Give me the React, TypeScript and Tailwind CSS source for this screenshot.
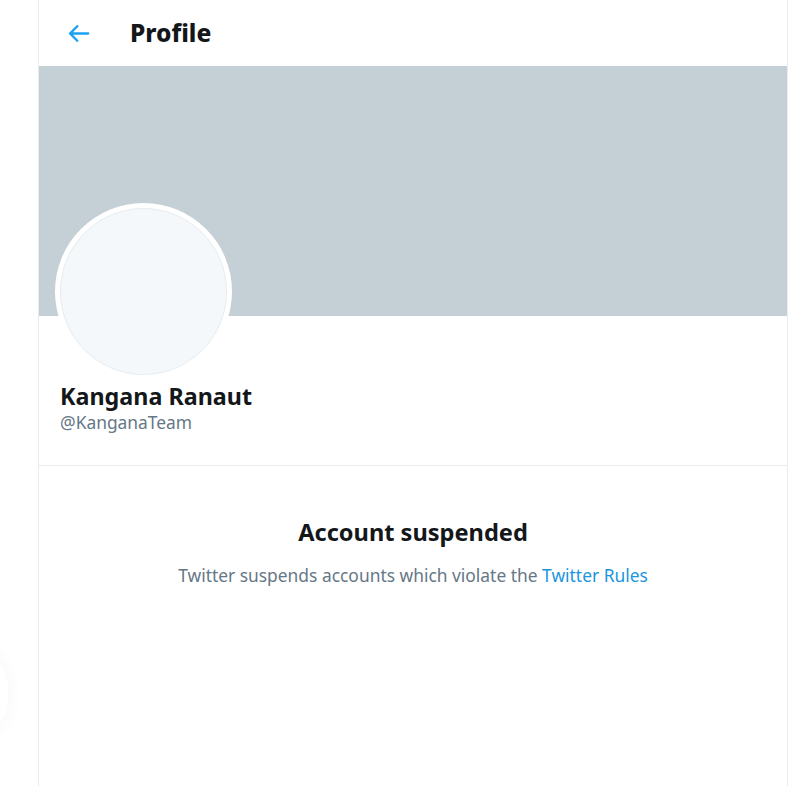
export default function App() {
  return (
    <div
      className="relative flex min-h-[786px] bg-white pl-[38px]"
      style={{ fontFamily: '"Noto Sans", "Open Sans", sans-serif' }}
    >
      {/* floating edge on the left */}
      <div className="absolute left-[-64px] top-[650px] h-[86px] w-[72px] rounded-full bg-white shadow-[0_0_18px_rgba(0,0,0,0.045)]" />

      <div className="min-h-[786px] w-[750px] border-x border-[#e6ecf0]">
        {/* header */}
        <div className="flex h-[66px] items-center pl-[25px]">
          <svg viewBox="0 0 24 24" className="h-[29px] w-[29px] fill-[#1da1f2]">
            <path d="M20 11H7.414l4.293-4.293c.39-.39.39-1.023 0-1.414s-1.023-.39-1.414 0l-6 6c-.39.39-.39 1.023 0 1.414l6 6c.195.195.45.293.707.293s.512-.098.707-.293c.39-.39.39-1.023 0-1.414L7.414 13H20c.553 0 1-.447 1-1s-.447-1-1-1z" />
          </svg>
          <h1 className="ml-[37px] text-[24.5px] font-extrabold text-[#14171a]">Profile</h1>
        </div>

        {/* banner */}
        <div className="h-[250px] bg-[#c4cfd6]" />

        {/* profile info */}
        <div className="border-b border-[#e6ecf0] px-[16px] pb-[31px]">
          <div className="-mt-[113px] flex h-[177px] w-[177px] items-center justify-center rounded-full bg-white">
            <div className="h-[167px] w-[167px] rounded-full border border-[#e6ecf0] bg-[#f5f8fa]" />
          </div>
          <div className="pl-[5px]">
            <div className="text-[23.3px] font-bold leading-[32px] text-[#14171a]">Kangana Ranaut</div>
            <div className="-mt-[2px] text-[17.4px] leading-[24px] text-[#657786]">@KanganaTeam</div>
          </div>
        </div>

        {/* suspended */}
        <div className="flex flex-col items-center pt-[49px]">
          <div className="text-[23.6px] font-bold leading-[34px] text-[#14171a]">Account suspended</div>
          <div className="mt-[14px] text-[17.4px] leading-[24px] text-[#657786]">
            Twitter suspends accounts which violate the{" "}
            <span className="text-[#1b95e0]">Twitter Rules</span>
          </div>
        </div>
      </div>
    </div>
  );
}
